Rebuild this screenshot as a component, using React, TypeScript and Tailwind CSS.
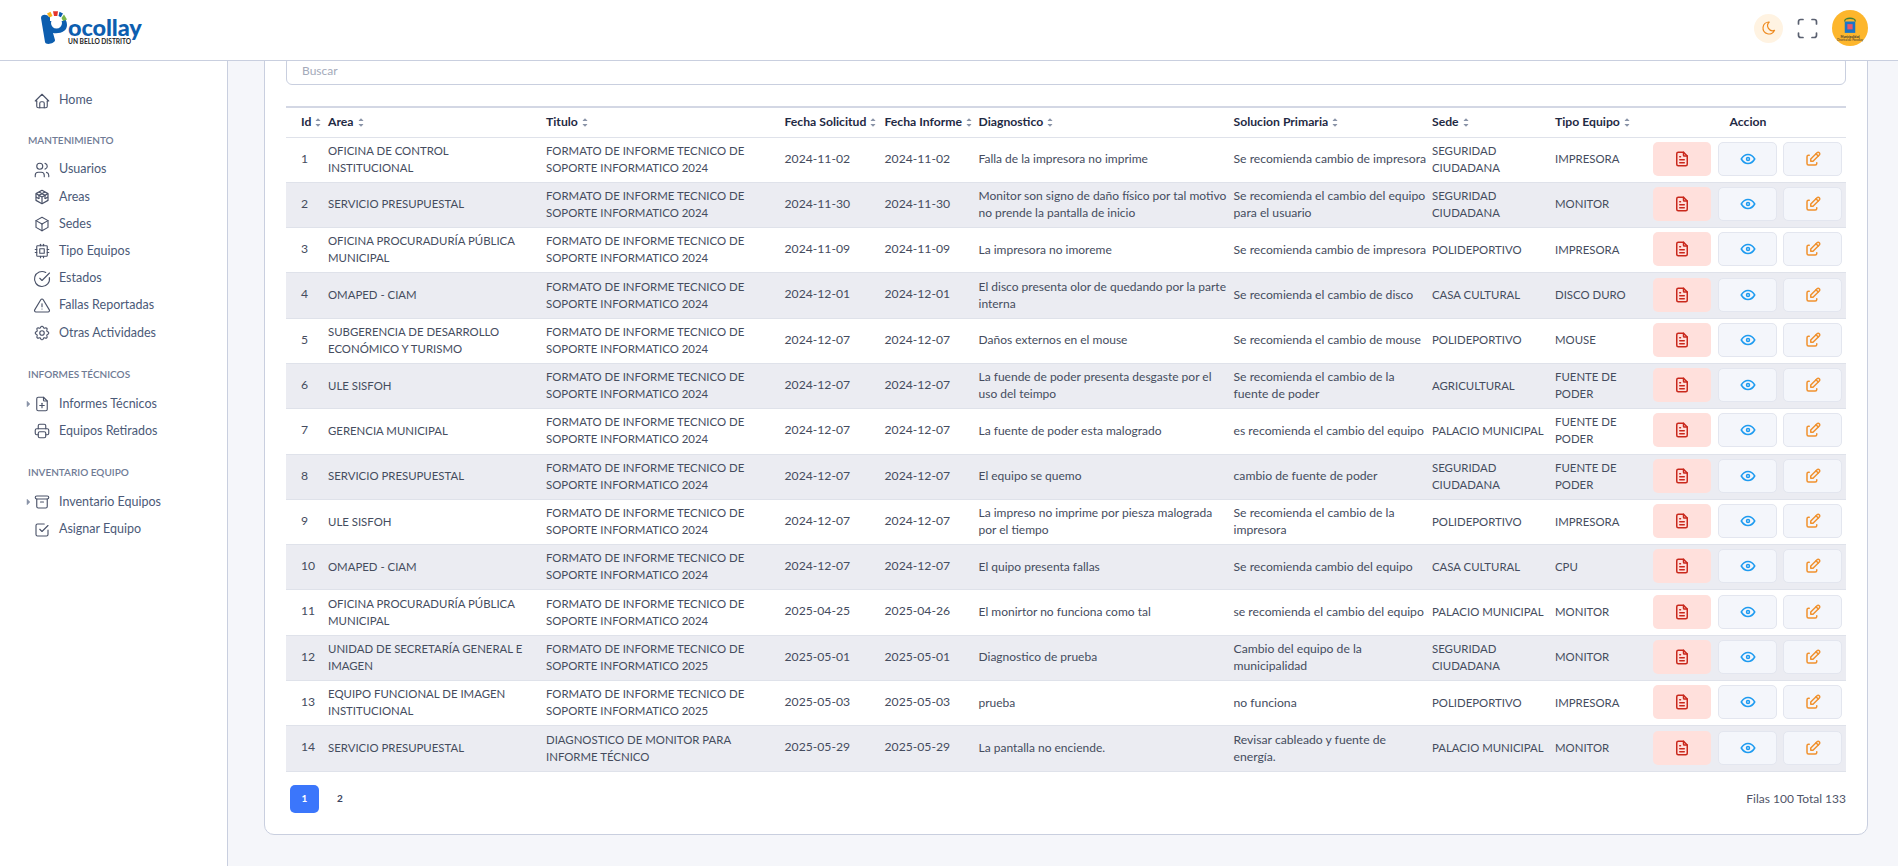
import {
  TbHome,
  TbUsers,
  TbBox,
  TbCpu,
  TbAlertTriangle,
  TbSettings,
  TbFilePlus,
  TbPrinter,
  TbArchive,
  TbCheckbox,
  TbMoon,
  TbMaximize,
  TbFileText,
  TbEye,
  TbEdit,
  TbCaretRightFilled,
  TbCaretUpFilled,
  TbCaretDownFilled,
} from "react-icons/tb";
import { LuCircleCheckBig } from "react-icons/lu";
import type { IconType } from "react-icons";

const FORMATO_24 = "FORMATO DE INFORME TECNICO DE SOPORTE INFORMATICO 2024";
const FORMATO_25 = "FORMATO DE INFORME TECNICO DE SOPORTE INFORMATICO 2025";

const rows = [
  { id: 1, area: "OFICINA DE CONTROL INSTITUCIONAL", titulo: FORMATO_24, sol: "2024-11-02", inf: "2024-11-02", diag: "Falla de la impresora no imprime", fix: "Se recomienda cambio de impresora", sede: "SEGURIDAD CIUDADANA", tipo: "IMPRESORA" },
  { id: 2, area: "SERVICIO PRESUPUESTAL", titulo: FORMATO_24, sol: "2024-11-30", inf: "2024-11-30", diag: "Monitor son signo de daño físico por tal motivo no prende la pantalla de inicio", fix: "Se recomienda el cambio del equipo para el usuario", sede: "SEGURIDAD CIUDADANA", tipo: "MONITOR" },
  { id: 3, area: "OFICINA PROCURADURÍA PÚBLICA MUNICIPAL", titulo: FORMATO_24, sol: "2024-11-09", inf: "2024-11-09", diag: "La impresora no imoreme", fix: "Se recomienda cambio de impresora", sede: "POLIDEPORTIVO", tipo: "IMPRESORA" },
  { id: 4, area: "OMAPED - CIAM", titulo: FORMATO_24, sol: "2024-12-01", inf: "2024-12-01", diag: "El disco presenta olor de quedando por la parte interna", fix: "Se recomienda el cambio de disco", sede: "CASA CULTURAL", tipo: "DISCO DURO" },
  { id: 5, area: "SUBGERENCIA DE DESARROLLO ECONÓMICO Y TURISMO", titulo: FORMATO_24, sol: "2024-12-07", inf: "2024-12-07", diag: "Daños externos en el mouse", fix: "Se recomienda el cambio de mouse", sede: "POLIDEPORTIVO", tipo: "MOUSE" },
  { id: 6, area: "ULE SISFOH", titulo: FORMATO_24, sol: "2024-12-07", inf: "2024-12-07", diag: "La fuende de poder presenta desgaste por el uso del teimpo", fix: "Se recomienda el cambio de la fuente de poder", sede: "AGRICULTURAL", tipo: "FUENTE DE PODER" },
  { id: 7, area: "GERENCIA MUNICIPAL", titulo: FORMATO_24, sol: "2024-12-07", inf: "2024-12-07", diag: "La fuente de poder esta malogrado", fix: "es recomienda el cambio del equipo", sede: "PALACIO MUNICIPAL", tipo: "FUENTE DE PODER" },
  { id: 8, area: "SERVICIO PRESUPUESTAL", titulo: FORMATO_24, sol: "2024-12-07", inf: "2024-12-07", diag: "El equipo se quemo", fix: "cambio de fuente de poder", sede: "SEGURIDAD CIUDADANA", tipo: "FUENTE DE PODER" },
  { id: 9, area: "ULE SISFOH", titulo: FORMATO_24, sol: "2024-12-07", inf: "2024-12-07", diag: "La impreso no imprime por piesza malograda por el tiempo", fix: "Se recomienda el cambio de la impresora", sede: "POLIDEPORTIVO", tipo: "IMPRESORA" },
  { id: 10, area: "OMAPED - CIAM", titulo: FORMATO_24, sol: "2024-12-07", inf: "2024-12-07", diag: "El quipo presenta fallas", fix: "Se recomienda cambio del equipo", sede: "CASA CULTURAL", tipo: "CPU" },
  { id: 11, area: "OFICINA PROCURADURÍA PÚBLICA MUNICIPAL", titulo: FORMATO_24, sol: "2025-04-25", inf: "2025-04-26", diag: "El monirtor no funciona como tal", fix: "se recomienda el cambio del equipo", sede: "PALACIO MUNICIPAL", tipo: "MONITOR" },
  { id: 12, area: "UNIDAD DE SECRETARÍA GENERAL E IMAGEN", titulo: FORMATO_25, sol: "2025-05-01", inf: "2025-05-01", diag: "Diagnostico de prueba", fix: "Cambio del equipo de la municipalidad", sede: "SEGURIDAD CIUDADANA", tipo: "MONITOR" },
  { id: 13, area: "EQUIPO FUNCIONAL DE IMAGEN INSTITUCIONAL", titulo: FORMATO_25, sol: "2025-05-03", inf: "2025-05-03", diag: "prueba", fix: "no funciona", sede: "POLIDEPORTIVO", tipo: "IMPRESORA" },
  { id: 14, area: "SERVICIO PRESUPUESTAL", titulo: "DIAGNOSTICO DE MONITOR PARA INFORME TÉCNICO", sol: "2025-05-29", inf: "2025-05-29", diag: "La pantalla no enciende.", fix: "Revisar cableado y fuente de energía.", sede: "PALACIO MUNICIPAL", tipo: "MONITOR" },
];

const columns = ["Id", "Area", "Titulo", "Fecha Solicitud", "Fecha Informe", "Diagnostico", "Solucion Primaria", "Sede", "Tipo Equipo"];

const CubeGrid: IconType = ({ className }) => (
  <svg viewBox="0 0 24 24" fill="none" stroke="currentColor" strokeWidth={1.6} strokeLinejoin="round" className={className}>
    <path d="M12 3l8 4.5v9L12 21l-8-4.5v-9z" />
    <path d="M4 7.5l8 4.5 8-4.5M12 12v9" />
    <path d="M8 5.3l8 4.5v4.7M16 5.3L8 9.8v4.7" />
    <path d="M4 12l4 2.3M20 12l-4 2.3" />
  </svg>
);

function NavItem({ icon: Icon, label, caret }: { icon: IconType; label: string; caret?: boolean }) {
  return (
    <a className="relative flex h-[27.2px] items-center gap-[8px] pl-[33px] text-[12.5px] text-[#4b5a78]">
      {caret && <TbCaretRightFilled className="absolute left-[23px] size-[10px] text-[#8a94a8]" />}
      <Icon className="size-[18px] text-[#4a5268]" strokeWidth={1.5} />
      <span>{label}</span>
    </a>
  );
}

function NavTitle({ children }: { children: string }) {
  return <div className="pl-[28px] text-[10px] font-semibold text-[#6f7b95]">{children}</div>;
}

function Logo() {
  return (
    <div className="flex h-[36px] items-start">
      <svg viewBox="0 0 28 36" className="h-[36px] w-[28px] shrink-0">
        <path d="M1 8C1 4 7 4 9 7L20 6C25 7 27 11 27 15C27 21 21 24 13 23L15 30C15.5 33 6 36 5 32Z" fill="#0d5eaf" />
        <circle cx="16.5" cy="13" r="5.5" fill="#fff" />
        <path d="M10 5h13v6H10z" fill="#fff" />
        <path d="M7 3.5L10.5 1.8L12.5 6L9.5 7.5Z" fill="#f6b21b" />
        <path d="M13 1.2L18 1.2L17.3 6L14 6Z" fill="#e5332a" />
        <path d="M19.5 1.8L23 3.6L20.8 7.2L18.5 6Z" fill="#0d5eaf" />
        <path d="M24 4.5L27 9.5L23 11L21.5 8Z" fill="#7ab648" />
      </svg>
      <div className="mt-[8px] flex flex-col">
        <span className="text-[23.5px] leading-[19px] font-black tracking-[-0.1px] text-[#0d5eaf]">ocollay</span>
        <span className="mt-[1px] whitespace-nowrap text-[6.6px] leading-[7px] font-bold text-[#222]">UN BELLO DISTRITO</span>
      </div>
    </div>
  );
}

function Avatar() {
  return (
    <div className="flex size-[36px] flex-col items-center justify-center rounded-full bg-[#fdb62c]">
      <svg viewBox="0 0 16 20" className="h-[20px] w-[14px]">
        <path d="M2 6 C1 1 15 1 14 6" fill="none" stroke="#3f7d3a" strokeWidth="1.5" />
        <rect x="2" y="6" width="12" height="13" fill="#1976c8" />
        <rect x="5" y="9" width="6" height="6" fill="#e9576a" />
      </svg>
      <span className="mt-[1px] text-[3px] leading-[3px] font-bold text-[#333]">Municipalidad</span>
      <span className="text-[3px] leading-[3px] text-[#333]">Distrital de Pocollay</span>
    </div>
  );
}

export default function App() {
  return (
    <div className="flex h-screen flex-col overflow-hidden bg-[#f5f6fa] font-['Lato','Noto_Sans',sans-serif]">
      <header className="relative z-10 flex h-[61px] shrink-0 items-center justify-between border-b border-[#c9cfdf] bg-white pb-[4px] pl-[40px] pr-[30px]">
        <Logo />
        <div className="flex items-center">
          <button className="flex size-[29px] items-center justify-center rounded-full bg-[#fff3e2] text-[#ee8a1f]">
            <TbMoon className="size-[16px]" strokeWidth={1.8} />
          </button>
          <TbMaximize className="ml-[11px] size-[27px] text-[#5a6070]" strokeWidth={1.5} />
          <div className="ml-[11px]">
            <Avatar />
          </div>
        </div>
      </header>
      <div className="flex min-h-0 flex-1">
        <aside className="w-[228px] shrink-0 border-r border-[#c9cfdf] bg-white">
          <div className="pt-[26px]">
            <NavItem icon={TbHome} label="Home" />
          </div>
          <div className="mt-[19px]">
            <NavTitle>MANTENIMIENTO</NavTitle>
          </div>
          <div className="mt-[8px]">
            <NavItem icon={TbUsers} label="Usuarios" />
            <NavItem icon={CubeGrid} label="Areas" />
            <NavItem icon={TbBox} label="Sedes" />
            <NavItem icon={TbCpu} label="Tipo Equipos" />
            <NavItem icon={LuCircleCheckBig} label="Estados" />
            <NavItem icon={TbAlertTriangle} label="Fallas Reportadas" />
            <NavItem icon={TbSettings} label="Otras Actividades" />
          </div>
          <div className="mt-[20px]">
            <NavTitle>INFORMES TÉCNICOS</NavTitle>
          </div>
          <div className="mt-[9px]">
            <NavItem icon={TbFilePlus} label="Informes Técnicos" caret />
            <NavItem icon={TbPrinter} label="Equipos Retirados" />
          </div>
          <div className="mt-[20px]">
            <NavTitle>INVENTARIO EQUIPO</NavTitle>
          </div>
          <div className="mt-[9px]">
            <NavItem icon={TbArchive} label="Inventario Equipos" caret />
            <NavItem icon={TbCheckbox} label="Asignar Equipo" />
          </div>
        </aside>
        <main className="min-w-0 flex-1 pl-[36px] pr-[30px]">
          <div className="-mt-[46px] rounded-[10px] border border-[#c9cfdf] bg-white px-[21px] pb-[21px] pt-[40px]">
            <input
              placeholder="Buscar"
              className="block h-[29px] w-full rounded-[6px] border border-[#c9cfdf] px-[15px] text-[12px] placeholder:text-[#a4aaba]"
            />
            <table className="mt-[21px] w-full table-fixed border-collapse text-[12.2px] text-[#454c5e]">
              <colgroup>
                <col className="w-[42px]" />
                <col className="w-[218px]" />
                <col className="w-[238.5px]" />
                <col className="w-[100px]" />
                <col className="w-[94px]" />
                <col className="w-[255px]" />
                <col className="w-[198.5px]" />
                <col className="w-[123px]" />
                <col className="w-[95px]" />
                <col />
              </colgroup>
              <thead>
                <tr className="h-[30px] border-b border-[#dfe2ea] border-t-2 border-t-[#d3d7e4]">
                  {columns.map((c) => (
                    <th key={c} className="first:pl-[15px] whitespace-nowrap text-left text-[12.2px] font-bold text-[#1f2a44]">
                      <span className="inline-flex items-center gap-[3px]">
                        {c}
                        <span className="flex flex-col text-[#8a94a8]">
                          <TbCaretUpFilled className="-mb-[3px] size-[8px]" />
                          <TbCaretDownFilled className="size-[8px]" />
                        </span>
                      </span>
                    </th>
                  ))}
                  <th className="text-center text-[12.2px] font-bold text-[#1f2a44]">Accion</th>
                </tr>
              </thead>
              <tbody>
                {rows.map((r, i) => (
                  <tr key={r.id} className={`h-[45.3px] border-b border-[#dfe2ea] [&>td]:pb-[2px] ${i % 2 === 1 ? "bg-[#ebecf2]" : "bg-white"}`}>
                    <td className="pl-[15px]">{r.id}</td>
                    <td className="pr-[16px] text-[11.4px] leading-[17px]">{r.area}</td>
                    <td className="pr-[8px] text-[11.4px] leading-[17px]">{r.titulo}</td>
                    <td>{r.sol}</td>
                    <td>{r.inf}</td>
                    <td className="pr-[4px] text-[12px] leading-[17px]">{r.diag}</td>
                    <td className="pr-[4px] leading-[17px]">{r.fix}</td>
                    <td className="pr-[6px] text-[11.4px] leading-[17px]">{r.sede}</td>
                    <td className="pr-[8px] text-[11.4px] leading-[17px]">{r.tipo}</td>
                    <td>
                      <div className="flex justify-end pr-[4px]">
                        <button className="flex h-[34px] w-[58px] items-center justify-center rounded-[5px] bg-[#ffe0dc] text-[#c9281c]">
                          <TbFileText className="size-[18px]" />
                        </button>
                        <button className="ml-[7px] flex h-[34px] w-[59px] items-center justify-center rounded-[5px] border border-[#e3e6ef] bg-[#f4f6fb] text-[#1e9bf0]">
                          <TbEye className="size-[18px]" />
                        </button>
                        <button className="ml-[6px] flex h-[34px] w-[59px] items-center justify-center rounded-[5px] border border-[#e3e6ef] bg-[#f4f6fb] text-[#f0912e]">
                          <TbEdit className="size-[18px]" />
                        </button>
                      </div>
                    </td>
                  </tr>
                ))}
              </tbody>
            </table>
            <div className="mt-[13px] flex items-center justify-between">
              <div className="flex items-center text-[10px] font-bold">
                <button className="ml-[4px] h-[28px] w-[29px] rounded-[5px] bg-[#3b76fb] text-white">1</button>
                <button className="ml-[15px] h-[28px] w-[12px] text-[#3c4560]">2</button>
              </div>
              <div className="text-[12px] text-[#4f5468]">Filas 100 Total 133</div>
            </div>
          </div>
        </main>
      </div>
    </div>
  );
}
